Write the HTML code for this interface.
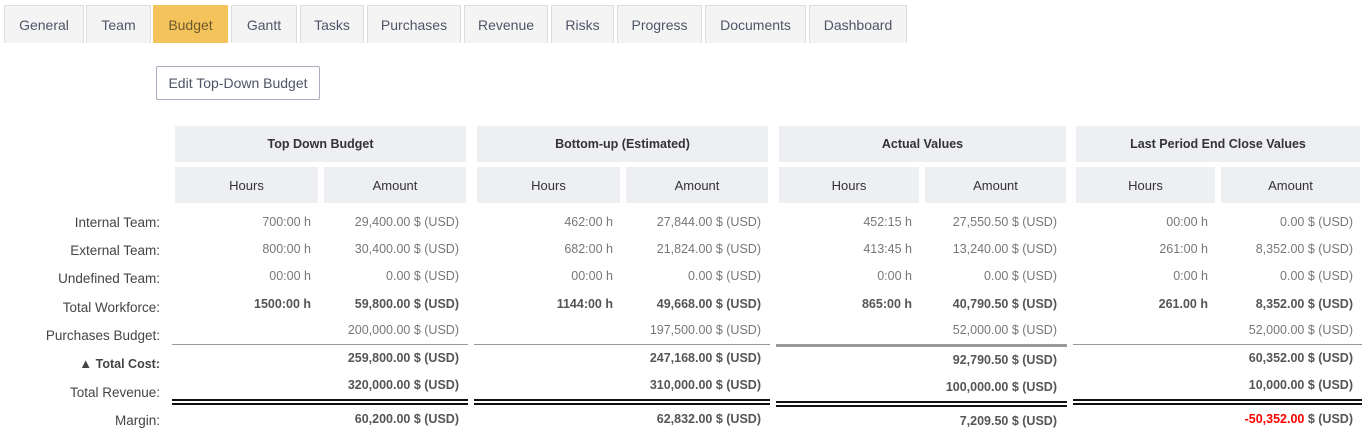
<!DOCTYPE html>
<html><head><meta charset="utf-8"><style>
*{margin:0;padding:0;box-sizing:border-box}
body{width:1362px;height:441px;background:#fff;font-family:"Liberation Sans",sans-serif;position:relative;overflow:hidden;color:#444}
.tab{position:absolute;top:5px;height:38px;background:#f4f4f4;border:1px solid #ddd;border-bottom:none;font-size:14px;color:#4f5566;display:flex;align-items:center;justify-content:center}
.tab.on{background:#f5c35c;border-color:#f5c35c;color:#6b5a2a}
.btn{position:absolute;left:156px;top:66px;width:164px;height:34px;border:1px solid #a9adbb;border-radius:2px;font-size:14px;color:#4f5566;display:flex;align-items:center;justify-content:center}
.h{position:absolute;background:#eeeff2;font-size:13px;color:#333;display:flex;align-items:center;justify-content:center}
.b{font-weight:bold;font-size:12.5px}
.t{position:absolute;font-size:12.5px;white-space:nowrap;line-height:16px}
.l{right:1202px;color:#444;font-size:13.5px}
.v{color:#777;text-align:right}
.vb{color:#555;font-weight:bold;text-align:right}
.ln{position:absolute;height:1px;background:#999}
.dl{position:absolute;height:6px;border-top:2px solid #111;border-bottom:2px solid #111}
</style></head><body>
<div class="tab" style="left:4px;width:80px">General</div>
<div class="tab" style="left:86px;width:65px">Team</div>
<div class="tab on" style="left:153px;width:75px">Budget</div>
<div class="tab" style="left:231px;width:66px">Gantt</div>
<div class="tab" style="left:300px;width:64px">Tasks</div>
<div class="tab" style="left:367px;width:94px">Purchases</div>
<div class="tab" style="left:464px;width:84px">Revenue</div>
<div class="tab" style="left:551px;width:63px">Risks</div>
<div class="tab" style="left:617px;width:85px">Progress</div>
<div class="tab" style="left:705px;width:101px">Documents</div>
<div class="tab" style="left:809px;width:98px">Dashboard</div>
<div class="btn">Edit Top-Down Budget</div>

<div class="h b" style="left:175px;top:126px;width:291px;height:36px">Top Down Budget</div>
<div class="h b" style="left:477px;top:126px;width:291px;height:36px">Bottom-up (Estimated)</div>
<div class="h b" style="left:779px;top:126px;width:287px;height:36px">Actual Values</div>
<div class="h b" style="left:1076px;top:126px;width:284px;height:36px">Last Period End Close Values</div>
<div class="h" style="left:175px;top:167px;width:143px;height:36px">Hours</div>
<div class="h" style="left:324px;top:167px;width:142px;height:36px">Amount</div>
<div class="h" style="left:477px;top:167px;width:143px;height:36px">Hours</div>
<div class="h" style="left:626px;top:167px;width:142px;height:36px">Amount</div>
<div class="h" style="left:779px;top:167px;width:140px;height:36px">Hours</div>
<div class="h" style="left:925px;top:167px;width:141px;height:36px">Amount</div>
<div class="h" style="left:1076px;top:167px;width:139px;height:36px">Hours</div>
<div class="h" style="left:1221px;top:167px;width:139px;height:36px">Amount</div>

<div class="t l" style="top:215px">Internal Team:</div>
<div class="t l" style="top:243px">External Team:</div>
<div class="t l" style="top:271px">Undefined Team:</div>
<div class="t l" style="top:300px">Total Workforce:</div>
<div class="t l" style="top:328px">Purchases Budget:</div>
<div class="t l" style="top:356px;font-weight:bold;font-size:12.5px"><span style="font-size:13px">&#9650;</span> Total Cost:</div>
<div class="t l" style="top:385px">Total Revenue:</div>
<div class="t l" style="top:413px">Margin:</div>

<!-- col1 -->
<div class="t v" style="right:1051px;top:214px">700:00 h</div>
<div class="t v" style="right:903px;top:214px">29,400.00 $ (USD)</div>
<div class="t v" style="right:1051px;top:241px">800:00 h</div>
<div class="t v" style="right:903px;top:241px">30,400.00 $ (USD)</div>
<div class="t v" style="right:1051px;top:268px">00:00 h</div>
<div class="t v" style="right:903px;top:268px">0.00 $ (USD)</div>
<div class="t vb" style="right:1051px;top:296px">1500:00 h</div>
<div class="t vb" style="right:903px;top:296px">59,800.00 $ (USD)</div>
<div class="t v" style="right:903px;top:322px">200,000.00 $ (USD)</div>
<div class="t vb" style="right:903px;top:350px">259,800.00 $ (USD)</div>
<div class="t vb" style="right:903px;top:377px">320,000.00 $ (USD)</div>
<div class="t vb" style="right:903px;top:411px">60,200.00 $ (USD)</div>
<!-- col2 -->
<div class="t v" style="right:749px;top:214px">462:00 h</div>
<div class="t v" style="right:601px;top:214px">27,844.00 $ (USD)</div>
<div class="t v" style="right:749px;top:241px">682:00 h</div>
<div class="t v" style="right:601px;top:241px">21,824.00 $ (USD)</div>
<div class="t v" style="right:749px;top:268px">00:00 h</div>
<div class="t v" style="right:601px;top:268px">0.00 $ (USD)</div>
<div class="t vb" style="right:749px;top:296px">1144:00 h</div>
<div class="t vb" style="right:601px;top:296px">49,668.00 $ (USD)</div>
<div class="t v" style="right:601px;top:322px">197,500.00 $ (USD)</div>
<div class="t vb" style="right:601px;top:350px">247,168.00 $ (USD)</div>
<div class="t vb" style="right:601px;top:377px">310,000.00 $ (USD)</div>
<div class="t vb" style="right:601px;top:411px">62,832.00 $ (USD)</div>
<!-- col3 -->
<div class="t v" style="right:450px;top:214px">452:15 h</div>
<div class="t v" style="right:305px;top:214px">27,550.50 $ (USD)</div>
<div class="t v" style="right:450px;top:241px">413:45 h</div>
<div class="t v" style="right:305px;top:241px">13,240.00 $ (USD)</div>
<div class="t v" style="right:450px;top:268px">0:00 h</div>
<div class="t v" style="right:305px;top:268px">0.00 $ (USD)</div>
<div class="t vb" style="right:450px;top:296px">865:00 h</div>
<div class="t vb" style="right:305px;top:296px">40,790.50 $ (USD)</div>
<div class="t v" style="right:305px;top:322px">52,000.00 $ (USD)</div>
<div class="t vb" style="right:305px;top:352px">92,790.50 $ (USD)</div>
<div class="t vb" style="right:305px;top:379px">100,000.00 $ (USD)</div>
<div class="t vb" style="right:305px;top:413px">7,209.50 $ (USD)</div>
<!-- col4 -->
<div class="t v" style="right:154px;top:214px">00:00 h</div>
<div class="t v" style="right:9px;top:214px">0.00 $ (USD)</div>
<div class="t v" style="right:154px;top:241px">261:00 h</div>
<div class="t v" style="right:9px;top:241px">8,352.00 $ (USD)</div>
<div class="t v" style="right:154px;top:268px">0:00 h</div>
<div class="t v" style="right:9px;top:268px">0.00 $ (USD)</div>
<div class="t vb" style="right:154px;top:296px">261.00 h</div>
<div class="t vb" style="right:9px;top:296px">8,352.00 $ (USD)</div>
<div class="t v" style="right:9px;top:322px">52,000.00 $ (USD)</div>
<div class="t vb" style="right:9px;top:350px">60,352.00 $ (USD)</div>
<div class="t vb" style="right:9px;top:377px">10,000.00 $ (USD)</div>
<div class="t vb" style="right:9px;top:411px"><span style="color:#f00">-50,352.00</span> $ (USD)</div>

<div class="ln" style="left:172px;top:344px;width:296px"></div>
<div class="ln" style="left:474px;top:344px;width:296px"></div>
<div class="ln" style="left:776px;top:344px;width:291px;height:3px;background:#999"></div>
<div class="ln" style="left:1073px;top:344px;width:289px"></div>
<div class="dl" style="left:172px;top:399px;width:296px"></div>
<div class="dl" style="left:474px;top:399px;width:296px"></div>
<div class="dl" style="left:776px;top:401px;width:291px"></div>
<div class="dl" style="left:1073px;top:399px;width:289px"></div>
</body></html>
